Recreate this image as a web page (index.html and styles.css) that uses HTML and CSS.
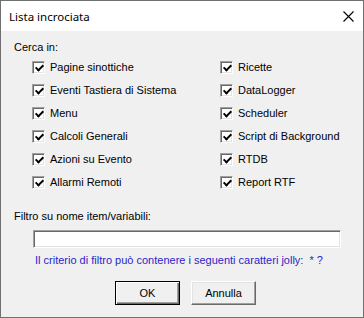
FILE: index.html
```html
<!DOCTYPE html>
<html lang="it">
<head>
    <meta charset="UTF-8">
    <title>Lista incrociata</title>
    <link rel="stylesheet" href="styles.css">
</head>
<body>
    <div class="window">
        <div class="titlebar">
            <span class="title">Lista incrociata</span>
            <svg class="close" width="11" height="11" viewBox="0 0 11 11">
                <path d="M0.5 0.5 L10.5 10.5 M10.5 0.5 L0.5 10.5" stroke="#000" stroke-width="1.1" fill="none"/>
            </svg>
        </div>

        <div class="client">
            <div class="label">Cerca in:</div>

            <div class="options">
                <label class="option"><span class="box"></span>Pagine sinottiche</label>
                <label class="option"><span class="box"></span>Eventi Tastiera di Sistema</label>
                <label class="option"><span class="box"></span>Menu</label>
                <label class="option"><span class="box"></span>Calcoli Generali</label>
                <label class="option"><span class="box"></span>Azioni su Evento</label>
                <label class="option"><span class="box"></span>Allarmi Remoti</label>
                <label class="option"><span class="box"></span>Ricette</label>
                <label class="option"><span class="box"></span>DataLogger</label>
                <label class="option"><span class="box"></span>Scheduler</label>
                <label class="option"><span class="box"></span>Script di Background</label>
                <label class="option"><span class="box"></span>RTDB</label>
                <label class="option"><span class="box"></span>Report RTF</label>
            </div>

            <div class="label filter-label">Filtro su nome item/variabili:</div>
            <div class="filter"></div>
            <div class="hint">Il criterio di filtro può contenere i seguenti caratteri jolly:&nbsp; * ?</div>

            <div class="buttons">
                <div class="btn btn-default">OK</div>
                <div class="btn">Annulla</div>
            </div>
        </div>
    </div>
</body>
</html>
```

FILE: styles.css
```css
* {
    margin: 0;
    padding: 0;
    box-sizing: border-box;
}

body {
    background: #f0f0f0;
    font-family: "Liberation Sans", Arial, sans-serif;
    font-size: 11px;
    line-height: 13px;
    color: #000;
}

.window {
    width: 364px;
    height: 318px;
    border: 1px solid #707070;
    display: flex;
    flex-direction: column;
    background: #f0f0f0;
}

.titlebar {
    height: 30px;
    background: #fff;
    display: flex;
    align-items: center;
    justify-content: space-between;
    padding: 0 9px 0 8px;
}

.title {
    font-family: "Noto Sans", sans-serif;
    font-size: 11.5px;
    color: #000;
}

.close {
    display: block;
    margin-top: 1px;
}

.client {
    flex: 1;
    padding: 10px 13px 0 13px;
}

.options {
    display: grid;
    grid-template-columns: 188px auto;
    grid-template-rows: repeat(6, 23px);
    grid-auto-flow: column;
    margin: 2px 0 0 18px;
}

.option {
    display: flex;
    align-items: center;
    gap: 5px;
    white-space: nowrap;
}

.box {
    position: relative;
    width: 13px;
    height: 13px;
    flex: none;
    background: #fff;
    border: 1px solid;
    border-color: #a0a0a0 #fff #fff #a0a0a0;
    box-shadow: inset 1px 1px #696969, inset -1px -1px #e3e3e3;
}

.box::after {
    content: "";
    position: absolute;
    left: 4px;
    top: 1px;
    width: 3px;
    height: 6px;
    border: solid #000;
    border-width: 0 2px 2px 0;
    transform: rotate(45deg);
}

.filter-label {
    margin-top: 16px;
}

.filter {
    width: 308px;
    height: 18px;
    margin: 7px 0 0 19px;
    background: #fff;
    border: 1px solid;
    border-color: #a0a0a0 #fff #fff #a0a0a0;
    box-shadow: inset 1px 1px #696969, inset -1px -1px #e3e3e3;
}

.hint {
    margin: 6px 0 0 21px;
    color: #2a1fc8;
    white-space: nowrap;
}

.buttons {
    display: flex;
    gap: 11px;
    margin: 14px 0 0 101px;
}

.btn {
    width: 65px;
    height: 24px;
    display: flex;
    align-items: center;
    justify-content: center;
    background: #f0f0f0;
    border: 1px solid;
    border-color: #fff #696969 #696969 #fff;
    box-shadow: inset -1px -1px #a0a0a0, inset 1px 1px #e3e3e3;
}

.btn-default {
    border-color: #000;
    box-shadow: inset 1px 1px #fff, inset -1px -1px #696969, inset -2px -2px #a0a0a0;
}
```
